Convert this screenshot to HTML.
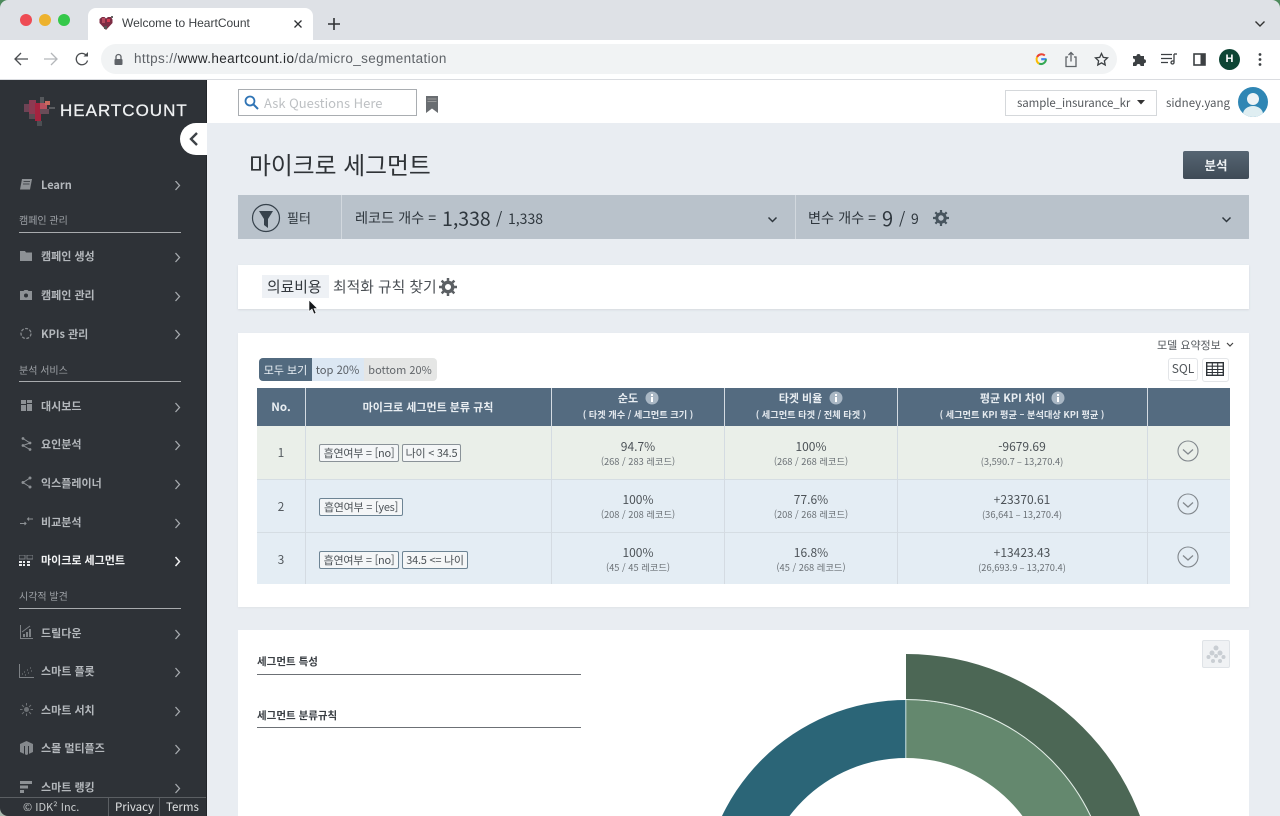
<!DOCTYPE html>
<html lang="ko"><head><meta charset="utf-8"><title>Welcome to HeartCount</title>
<style>
html,body{margin:0;padding:0;width:1280px;height:816px;overflow:hidden;background:#e9edf2}
body{position:relative;font-family:"Noto Sans CJK KR","Liberation Sans",sans-serif;color:#3a4046}
.a,.t,svg.a{position:absolute}
.t{white-space:nowrap;line-height:20px;height:20px}
.c{transform:translateX(-50%);text-align:center}
.ui{font-family:"Liberation Sans","Noto Sans CJK KR",sans-serif}
.m{font-size:11px;font-weight:700;color:#b4b8bc;left:41px}
.s{font-size:10px;color:#9da1a6;left:19px}
.l{position:absolute;left:19px;width:162px;height:1px;background:#a8abae}
.hd{font-size:11px;font-weight:700;color:#e9eef2}
.sb{font-size:9.2px;font-weight:700;color:#e4e9ee}
.v{font-size:12px;color:#4c5257}
.d{font-size:9.3px;color:#6b7176}
.tag{position:absolute;height:18px;line-height:16px;box-sizing:border-box;border:1px solid #8a9298;border-radius:2px;background:#f4f6f7;font-size:11px;letter-spacing:-.25px;color:#4c5257;padding:0;white-space:nowrap;text-align:center}
.vl{position:absolute;width:1px;background:#d4dbe2}
.n{font-size:12px;color:#555b60}
.f{line-height:18px;height:18px}
</style></head><body>

<!-- browser chrome -->
<div class="a" style="left:0;top:0;width:1280px;height:40px;background:#dee1e6"></div>
<svg class="a" style="left:0;top:0" width="8" height="8"><path d="M0 0h8A8 8 0 0 0 0 8z" fill="#4d8a5c"/></svg>
<svg class="a" style="left:1272px;top:0" width="8" height="8"><path d="M8 0H0A8 8 0 0 1 8 8z" fill="#4d8a5c"/></svg>
<div class="a" style="left:0;top:40px;width:1280px;height:39px;background:#fff"></div>
<div class="a" style="left:0;top:79px;width:1280px;height:1px;background:#dadce0"></div>
<div class="a" style="left:88px;top:8px;width:225px;height:34px;background:#fff;border-radius:8px 8px 0 0"></div>
<div class="a" style="left:20px;top:14px;width:12px;height:12px;border-radius:50%;background:#ee4b54"></div>
<div class="a" style="left:39px;top:14px;width:12px;height:12px;border-radius:50%;background:#edb22e"></div>
<div class="a" style="left:58px;top:14px;width:12px;height:12px;border-radius:50%;background:#35c84a"></div>
<svg class="a" style="left:98px;top:15px" width="17" height="17" viewBox="0 0 17 17"><path d="M8 15L1.500 8V4L4 2h2.500L8 3.500 10 2h3l1.500 2.500V8Z" fill="#7c2c44"/><path d="M4 3h3v5H4z" fill="#b54a5e"/><path d="M9 4h3v3H9z" fill="#d43a50"/><path d="M6 11h3v3H6z" fill="#555"/><path d="M13 1h2v2h-2z" fill="#666"/></svg>
<div class="t ui" style="left:122px;top:13px;font-size:12px;color:#3c4043">Welcome to HeartCount</div>
<svg class="a" style="left:293px;top:19px" width="10" height="10" viewBox="0 0 10 10"><path d="M1.500 1.500l7 7M8.500 1.500l-7 7" stroke="#2f3134" stroke-width="1.300" fill="none"/></svg>
<svg class="a" style="left:327px;top:17px" width="14" height="14" viewBox="0 0 14 14"><path d="M7 1v12M1 7h12" stroke="#2f3134" stroke-width="1.600"/></svg>
<svg class="a" style="left:1254px;top:20px" width="12" height="8" viewBox="0 0 12 8"><path d="M1.500 1.500L6 6l4.500-4.500" stroke="#333" stroke-width="1.400" fill="none"/></svg>

<svg class="a" style="left:13px;top:51px" width="16" height="16" viewBox="0 0 16 16"><path d="M15 8H2M8 2L2 8l6 6" stroke="#4a4d50" stroke-width="1.300" fill="none"/></svg>
<svg class="a" style="left:43px;top:51px" width="16" height="16" viewBox="0 0 16 16"><path d="M1 8h13M8 2l6 6-6 6" stroke="#b4b7ba" stroke-width="1.300" fill="none"/></svg>
<svg class="a" style="left:74px;top:51px" width="16" height="16" viewBox="0 0 16 16"><path d="M13.500 9.500A5.700 5.700 0 1 1 12 4" stroke="#4a4d50" stroke-width="1.300" fill="none"/><path d="M9.500 5.500H14V1z" fill="#4a4d50"/></svg>
<div class="a" style="left:101px;top:44px;width:1016px;height:30px;border-radius:15px;background:#f1f3f4"></div>
<svg class="a" style="left:113px;top:53px" width="11" height="13" viewBox="0 0 11 13"><path d="M3 6V4a2.500 2.500 0 0 1 5 0v2" stroke="#5f6368" stroke-width="1.300" fill="none"/><rect x="1.500" y="6" width="8" height="6" rx="1" fill="#5f6368"/></svg>
<div class="t ui" style="left:134px;top:49px;font-size:13.5px;color:#5f6368;letter-spacing:.38px">https://<span style="color:#26282b">www.heartcount.io</span>/da/micro_segmentation</div>
<!-- google G -->
<svg class="a" style="left:1034px;top:52px" width="14" height="14" viewBox="0 0 14 14"><path d="M12.500 7.200H7.200" stroke="#4285f4" stroke-width="2.200"/><path d="M12 7.200A5 5 0 0 1 5 11.600" stroke="#34a853" stroke-width="2" fill="none"/><path d="M5 11.600A5 5 0 0 1 3.100 5" stroke="#fbbc05" stroke-width="2" fill="none"/><path d="M3.100 5A5 5 0 0 1 10.800 3.500" stroke="#ea4335" stroke-width="2" fill="none"/></svg>
<svg class="a" style="left:1064px;top:51px" width="14" height="17" viewBox="0 0 14 17"><path d="M4 6H2v9.500h10V6h-2" stroke="#5f6368" stroke-width="1.300" fill="none"/><path d="M7 10.500V1.500M4.500 4L7 1.500 9.500 4" stroke="#5f6368" stroke-width="1.300" fill="none"/></svg>
<svg class="a" style="left:1094px;top:52px" width="15" height="15" viewBox="0 0 15 15"><path d="M7.500 1.500l1.800 3.900 4.200.5-3.100 2.900.8 4.200-3.700-2.100-3.700 2.100.8-4.200L1.500 5.900l4.200-.5z" stroke="#3c4043" stroke-width="1.300" fill="none"/></svg>
<svg class="a" style="left:1132px;top:52px" width="15" height="15" viewBox="0 0 15 15"><path d="M1 4h3.500a2 2 0 1 1 4 0H12v3.200a2 2 0 1 1 0 4V14H8.500a2 2 0 1 0-4 0H1v-3.500a2 2 0 1 0 0-4z" fill="#3c4043"/></svg>
<svg class="a" style="left:1161px;top:53px" width="16" height="13" viewBox="0 0 16 13"><path d="M0 1.500h11M0 5.500h11M0 9.500h7" stroke="#3c4043" stroke-width="1.200"/><path d="M13 1v8.500a1.500 1.500 0 1 1-1.500-1.500H13" stroke="#3c4043" stroke-width="1.300" fill="none"/><path d="M13 1h3" stroke="#3c4043" stroke-width="1.300"/></svg>
<svg class="a" style="left:1193px;top:53px" width="13" height="13" viewBox="0 0 13 13"><rect x="1" y="1" width="11" height="11" stroke="#3c4043" stroke-width="1.600" fill="none"/><rect x="7.500" y="1" width="4.500" height="11" fill="#3c4043"/></svg>
<div class="a" style="left:1219px;top:49px;width:21px;height:21px;border-radius:50%;background:#0d4534"></div>
<div class="t ui c" style="left:1229.500px;top:49px;font-size:11px;font-weight:700;color:#fff;line-height:21px">H</div>
<svg class="a" style="left:1257px;top:52px" width="6" height="15" viewBox="0 0 6 15"><circle cx="3" cy="2.500" r="1.400" fill="#3c4043"/><circle cx="3" cy="7.500" r="1.400" fill="#3c4043"/><circle cx="3" cy="12.500" r="1.400" fill="#3c4043"/></svg>

<!-- top bar -->
<div class="a" style="left:207px;top:80px;width:1073px;height:43px;background:#fff"></div>
<div class="a" style="left:238px;top:89px;width:179px;height:27px;box-sizing:border-box;border:1px solid #a9adb1;background:#fff"></div>
<svg class="a" style="left:244px;top:95px" width="15" height="15" viewBox="0 0 15 15"><circle cx="6" cy="6" r="4.500" stroke="#2f74b5" stroke-width="1.800" fill="none"/><path d="M9.500 9.500L14 14" stroke="#2f74b5" stroke-width="2"/></svg>
<div class="t" style="left:264px;top:93px;font-size:13px;color:#bdc0c3">Ask Questions Here</div>
<svg class="a" style="left:426px;top:96px" width="12" height="17" viewBox="0 0 12 17"><path d="M0 0h12v17L6 12.500 0 17z" fill="#696d71"/><path d="M1.500 3h9M1.500 5.500h9" stroke="#aaa" stroke-width=".7"/></svg>
<div class="a" style="left:1005px;top:90px;width:152px;height:26px;box-sizing:border-box;border:1px solid #d5d8db;background:#fff"></div>
<div class="t" style="left:1017px;top:93px;font-size:11.500px;color:#54585c;letter-spacing:-.1px">sample_insurance_kr</div>
<svg class="a" style="left:1137px;top:100px" width="8" height="5"><path d="M0 0h8L4 4.500z" fill="#333"/></svg>
<div class="t" style="left:1166px;top:93px;font-size:11.500px;color:#54585c">sidney.yang</div>
<svg class="a" style="left:1238px;top:87px" width="30" height="30" viewBox="0 0 30 30"><defs><clipPath id="cp"><circle cx="15" cy="15" r="15"/></clipPath></defs><circle cx="15" cy="15" r="15" fill="#2f86b4"/><g clip-path="url(#cp)"><circle cx="15" cy="12" r="6" fill="#eef3f5"/><ellipse cx="15" cy="27" rx="10" ry="8" fill="#dfeef2"/></g></svg>

<!-- sidebar -->
<div class="a" style="left:0;top:80px;width:207px;height:736px;background:#2e3237;border-right:1px solid #23262a;box-sizing:border-box"></div>
<svg class="a" style="left:23px;top:95px" width="34" height="32" viewBox="0 0 34 32"><rect x="1" y="9" width="6" height="8" fill="#6e4355"/><rect x="6" y="5" width="7" height="14" fill="#8c3a52"/><rect x="12" y="8" width="6" height="18" fill="#a5233f"/><rect x="17" y="2" width="4" height="6" fill="#55585c"/><rect x="17" y="8" width="7" height="6" fill="#b8505e"/><rect x="22" y="6" width="5" height="4" fill="#c86a5e"/><rect x="17" y="14" width="9" height="5" fill="#6a4c58"/><rect x="6" y="19" width="6" height="5" fill="#5a4a52"/><rect x="14" y="26" width="5" height="5" fill="#4c4f53"/><rect x="26" y="12" width="6" height="2" fill="#5a5d61"/></svg>
<div class="t ui" style="left:60px;top:101px;font-size:17px;color:#eef0f1;letter-spacing:1px;-webkit-text-stroke:.3px #eef0f1">HEARTCOUNT</div>
<div class="a" style="left:180px;top:123px;width:40px;height:32px;background:#fff;border-radius:16px 0 0 16px"></div>
<div class="a" style="left:207px;top:123px;width:13px;height:32px;background:#e9edf2"></div>
<svg class="a" style="left:188px;top:131px" width="11" height="16" viewBox="0 0 11 16"><path d="M9 2L3 8l6 6" stroke="#3d4247" stroke-width="2.400" fill="none"/></svg>

<svg class="a" style="left:19px;top:178px" width="14" height="13" viewBox="0 0 14 13"><path d="M3 1h10l-2 10.500H1z" fill="#8d9195"/><path d="M4.500 3.500h6.500M4 6h6.500" stroke="#2e3237" stroke-width=".8"/></svg>
<div class="t m" style="top:174.500px">Learn</div>
<div class="t s" style="top:210px">캠페인 관리</div><div class="l" style="top:232px"></div>
<svg class="a" style="left:20px;top:251px" width="12" height="10"><path d="M0 0h5l1 1.500h6V10H0z" fill="#8d9195"/></svg>
<div class="t m" style="top:246px">캠페인 생성</div>
<svg class="a" style="left:20px;top:290px" width="12" height="10"><path d="M0 1h3.500l1-1h3l1 1H12v9H0z" fill="#8d9195"/><circle cx="6" cy="5.500" r="2" fill="#2e3237"/></svg>
<div class="t m" style="top:285px">캠페인 관리</div>
<svg class="a" style="left:20px;top:327px" width="12" height="13"><circle cx="6" cy="6.500" r="5" stroke="#85898d" stroke-width="1.300" stroke-dasharray="3 1.500" fill="none"/></svg>
<div class="t m" style="top:324px">KPIs 관리</div>
<div class="t s" style="top:359.500px">분석 서비스</div><div class="l" style="top:381px"></div>
<svg class="a" style="left:21px;top:400px" width="11" height="11"><path d="M0 0h5v4H0zM6 0h5v3H6zM0 5h5v6H0zM6 4h5v7H6z" fill="#8d9195"/></svg>
<div class="t m" style="top:396px">대시보드</div>
<svg class="a" style="left:21px;top:437px" width="11" height="14" viewBox="0 0 11 14"><path d="M2 1.500L9 6 2 8.500 9 12.500" stroke="#8d9195" stroke-width="1" fill="none"/><circle cx="2" cy="1.500" r="1.400" fill="#8d9195"/><circle cx="9" cy="6" r="1.400" fill="#8d9195"/><circle cx="2" cy="8.500" r="1.400" fill="#8d9195"/><circle cx="9" cy="12.500" r="1.400" fill="#8d9195"/></svg>
<div class="t m" style="top:434px">요인분석</div>
<svg class="a" style="left:21px;top:476px" width="11" height="13" viewBox="0 0 11 13"><path d="M9 2L2 6.500 9 11" stroke="#8d9195" stroke-width="1" fill="none"/><circle cx="9" cy="2" r="1.500" fill="#8d9195"/><circle cx="2" cy="6.500" r="1.500" fill="#8d9195"/><circle cx="9" cy="11" r="1.500" fill="#8d9195"/></svg>
<div class="t m" style="top:473px">익스플레이너</div>
<svg class="a" style="left:20px;top:517px" width="13" height="9" viewBox="0 0 13 9"><path d="M0 6.500h6M4.500 5l1.500 1.500L4.500 8M13 2H7.500M9 .5L7.500 2 9 3.500" stroke="#8d9195" stroke-width="1" fill="none"/></svg>
<div class="t m" style="top:512px">비교분석</div>
<svg class="a" style="left:19px;top:555px" width="14" height="11"><path d="M0 6h3v2H0zM4 6h2v2H4zM8 6h3v2H8zM0 9h3v2H0zM4 9h2v2H4zM8 9h3v2H8z" fill="#e8eaec"/><path d="M0 0h6v4H0zM8 0h6v4H8z" fill="none" stroke="#7b7f83"/></svg>
<div class="t m" style="top:550px;color:#f3f4f5">마이크로 세그먼트</div>
<div class="t s" style="top:586px">시각적 발견</div><div class="l" style="top:608px"></div>
<svg class="a" style="left:20px;top:625px" width="13" height="14" viewBox="0 0 13 14"><path d="M.5 0v13.500H13" stroke="#7d8185" fill="none"/><path d="M3 12V9h2v3zM6 12V7h2v5zM9 12V4h2v8z" fill="#7d8185"/><path d="M2 7l4-3 4-3" stroke="#7d8185" fill="none"/></svg>
<div class="t m" style="top:622.500px">드릴다운</div>
<svg class="a" style="left:19px;top:664px" width="15" height="14" viewBox="0 0 15 14"><path d="M.5 0v13.500H15" stroke="#7d8185" fill="none"/><path d="M3 10h1M5 8h1M6 11h1M8 6h1M9 9h1M11 4h1M12 7h1" stroke="#7d8185"/></svg>
<div class="t m" style="top:661px">스마트 플롯</div>
<svg class="a" style="left:20px;top:703px" width="13" height="13" viewBox="0 0 13 13"><circle cx="6.500" cy="6.500" r="2.500" fill="#6d7175"/><path d="M6.500 0v2.500M6.500 10.500V13M0 6.500h2.500M10.500 6.500H13M2 2l2 2M9 9l2 2M11 2L9 4M4 9l-2 2" stroke="#6d7175"/></svg>
<div class="t m" style="top:700px">스마트 서치</div>
<svg class="a" style="left:20px;top:741px" width="13" height="14" viewBox="0 0 13 14"><path d="M6.500 0L13 3v8l-6.500 3L0 11V3z" fill="#85898d"/><path d="M4.500 5v9M8.500 5v9" stroke="#2e3237"/></svg>
<div class="t m" style="top:738px">스몰 멀티플즈</div>
<svg class="a" style="left:20px;top:781px" width="12" height="12"><path d="M0 0h12v3H0zM0 4.500h8v3H0zM0 9h4v3H0z" fill="#8d9195"/></svg>
<div class="t m" style="top:777px">스마트 랭킹</div>
<!-- chevrons -->
<svg class="a" style="left:174px;top:181px" width="7" height="620" viewBox="0 0 7 620" fill="none" stroke="#a6aaae" stroke-width="1.300"><path d="M1.500 0l4 4.500-4 4.500M1.500 72l4 4.500-4 4.500M1.500 111l4 4.500-4 4.500M1.500 149l4 4.500-4 4.500M1.500 222l4 4.500-4 4.500M1.500 260l4 4.500-4 4.500M1.500 299l4 4.500-4 4.500M1.500 338l4 4.500-4 4.500M1.500 449l4 4.500-4 4.500M1.500 487l4 4.500-4 4.500M1.500 526l4 4.500-4 4.500M1.500 564l4 4.500-4 4.500M1.500 603l4 4.500-4 4.500"/><path d="M1.500 376l4 4.500-4 4.500" stroke="#f0f1f2" stroke-width="1.500"/></svg>
<div class="a" style="left:0;top:797px;width:206px;height:19px;background:#2e3237;border-top:1px solid #5b5f63;box-sizing:border-box"></div>
<div class="a" style="left:108px;top:797px;width:1px;height:19px;background:#5b5f63"></div>
<div class="a" style="left:159px;top:797px;width:1px;height:19px;background:#5b5f63"></div>
<div class="t f" style="left:23px;top:798px;font-size:11px;color:#c6c9cb">© IDK² Inc.</div>
<div class="t f" style="left:115px;top:798px;font-size:11.500px;color:#e2e4e5">Privacy</div>
<div class="t f" style="left:166px;top:798px;font-size:11.500px;color:#e2e4e5">Terms</div>
<svg class="a" style="left:0;top:808px" width="8" height="8"><path d="M0 8h8A8 8 0 0 1 0 0z" fill="#a9b8ad"/></svg>

<!-- heading -->
<div class="t" style="left:249px;top:149px;font-size:23.800px;line-height:30px;height:30px;color:#2f3337">마이크로 세그먼트</div>
<div class="a" style="left:1183px;top:151px;width:66px;height:28px;border-radius:2px;background:linear-gradient(#566573,#3f4b57)"></div>
<div class="t c" style="left:1216px;top:155px;font-size:12.500px;font-weight:700;color:#eef1f3">분석</div>

<!-- filter bar -->
<div class="a" style="left:238px;top:195px;width:1011px;height:44px;background:#b9c2cb"></div>
<div class="a" style="left:341px;top:195px;width:1px;height:44px;background:#d2d8de"></div>
<div class="a" style="left:795px;top:195px;width:1px;height:44px;background:#d2d8de"></div>
<svg class="a" style="left:251px;top:203px" width="30" height="30" viewBox="0 0 30 30"><circle cx="15" cy="15" r="13.500" stroke="#37424c" stroke-width="1.200" fill="none"/><path d="M8 8h14l-5 8v9l-4-3v-6z" fill="#37424c"/></svg>
<div class="t" style="left:287px;top:207.500px;font-size:13px;color:#2f373e">필터</div>
<div class="t" style="left:355px;top:208px;font-size:14.200px;color:#2f373e">레코드 개수 =</div>
<div class="t" style="left:442px;top:208px;font-size:19.500px;color:#2f373e">1,338</div>
<div class="t" style="left:496px;top:208px;font-size:16px;color:#2f373e">/</div>
<div class="t" style="left:508px;top:209px;font-size:14px;color:#2f373e">1,338</div>
<svg class="a" style="left:767px;top:216px" width="11" height="8"><path d="M1.500 1.500L5.500 5.500l4-4" stroke="#2f373e" stroke-width="1.500" fill="none"/></svg>
<div class="t" style="left:808px;top:208px;font-size:14.200px;color:#2f373e">변수 개수 =</div>
<div class="t" style="left:882px;top:208px;font-size:20px;color:#2f373e">9</div>
<div class="t" style="left:899px;top:208px;font-size:16px;color:#2f373e">/</div>
<div class="t" style="left:911px;top:209px;font-size:14px;color:#2f373e">9</div>
<svg class="a" style="left:933px;top:210px" width="16" height="16" viewBox="0 0 16 16"><circle cx="8" cy="8" r="4.200" stroke="#47545e" stroke-width="3" fill="none"/><path d="M8 0v16M0 8h16M2.300 2.300l11.400 11.400M13.700 2.300L2.300 13.700" stroke="#47545e" stroke-width="2.200" stroke-dasharray="2.600 10.800 2.600"/></svg>
<svg class="a" style="left:1221px;top:216px" width="11" height="8"><path d="M1.500 1.500L5.500 5.500l4-4" stroke="#2f373e" stroke-width="1.500" fill="none"/></svg>

<!-- title card -->
<div class="a" style="left:238px;top:265px;width:1011px;height:44px;background:#fff;box-shadow:0 1px 2px #d5d9de"></div>
<div class="a" style="left:262px;top:275px;width:67px;height:23px;background:#eef1f5"></div>
<div class="t" style="left:267px;top:277px;font-size:14.800px;color:#34393e">의료비용</div>
<div class="t" style="left:333px;top:277px;font-size:14.800px;color:#4a4f54">최적화 규칙 찾기</div>
<svg class="a" style="left:439px;top:278px" width="18" height="18" viewBox="0 0 16 16"><circle cx="8" cy="8" r="4.200" stroke="#5b5f63" stroke-width="3" fill="none"/><path d="M8 0v16M0 8h16M2.300 2.300l11.400 11.400M13.700 2.300L2.300 13.700" stroke="#5b5f63" stroke-width="2.200" stroke-dasharray="2.600 10.800 2.600"/></svg>
<svg class="a" style="left:308px;top:299px;z-index:5" width="11" height="17" viewBox="0 0 11 17"><path d="M1 1v11.500l3-2.500 2 5 2-1-2-4.500h3.500z" fill="#15171a" stroke="#fff" stroke-width=".6"/></svg>

<!-- table card -->
<div class="a" style="left:238px;top:333px;width:1011px;height:274px;background:#fff;box-shadow:0 1px 2px #dfe3e7"></div>
<div class="t" style="left:1157px;top:335px;font-size:11px;color:#54595e">모델 요약정보</div>
<svg class="a" style="left:1226px;top:342px" width="8" height="6"><path d="M1 1l3 3 3-3" stroke="#444" stroke-width="1.200" fill="none"/></svg>
<div class="a" style="left:1168px;top:358px;width:30px;height:23px;box-sizing:border-box;border:1px solid #e3e5e8;border-radius:3px"></div>
<div class="t c" style="left:1183px;top:359px;font-size:12px;color:#52575b">SQL</div>
<div class="a" style="left:1202px;top:358px;width:27px;height:24px;box-sizing:border-box;border:1px solid #e3e5e8;border-radius:3px"></div>
<svg class="a" style="left:1206px;top:362px" width="18" height="14" viewBox="0 0 18 14"><rect x=".7" y=".7" width="16.600" height="12.600" fill="none" stroke="#2e3338" stroke-width="1.400"/><path d="M.5 4.200h17M.5 7.500h17M.5 10.500h17M6.300 1v12M11.700 1v12" stroke="#2e3338" stroke-width="1.100"/></svg>
<div class="a" style="left:259px;top:358px;width:178px;height:23px;border-radius:4px;background:#e5e6e5"></div>
<div class="a" style="left:259px;top:358px;width:53px;height:23px;border-radius:4px 0 0 4px;background:#526a7f"></div>
<div class="a" style="left:312px;top:358px;width:52px;height:23px;background:#dbe7f3"></div>
<div class="t c" style="left:285.500px;top:360px;font-size:11px;color:#eaf0f5">모두 보기</div>
<div class="t c" style="left:337.500px;top:360px;font-size:11.200px;color:#5b6168">top 20%</div>
<div class="t c" style="left:400px;top:360px;font-size:11px;color:#63676b">bottom 20%</div>

<div class="a" style="left:257px;top:388px;width:973px;height:38px;background:#546b80"></div>
<div class="a" style="left:257px;top:426px;width:973px;height:53px;background:#eaefe9"></div>
<div class="a" style="left:257px;top:479px;width:973px;height:53px;background:#e4edf4;border-top:1px solid #d5dde3;box-sizing:border-box"></div>
<div class="a" style="left:257px;top:532px;width:973px;height:52px;background:#e4edf4;border-top:1px solid #d5dde3;box-sizing:border-box"></div>
<div class="vl" style="left:305px;top:388px;height:196px"></div>
<div class="vl" style="left:551px;top:388px;height:196px"></div>
<div class="vl" style="left:724px;top:388px;height:196px"></div>
<div class="vl" style="left:897px;top:388px;height:196px"></div>
<div class="vl" style="left:1147px;top:388px;height:196px"></div>

<div class="t hd c" style="left:281px;top:397px;font-size:11.500px">No.</div>
<div class="t hd c" style="left:428px;top:397px">마이크로 세그먼트 분류 규칙</div>
<div class="t hd c" style="left:628px;top:388px">순도</div>
<div class="t sb c" style="left:638px;top:404px">( 타겟 개수 / 세그먼트 크기 )</div>
<div class="t hd c" style="left:800.500px;top:388px">타겟 비율</div>
<div class="t sb c" style="left:811px;top:404px">( 세그먼트 타겟 / 전체 타겟 )</div>
<div class="t hd c" style="left:1012.500px;top:388px">평균 KPI 차이</div>
<div class="t sb c" style="left:1022px;top:404px">( 세그먼트 KPI 평균 – 분석대상 KPI 평균 )</div>
<svg class="a" style="left:645px;top:391px" width="14" height="14"><circle cx="7" cy="7" r="6.500" fill="#a9b7c4"/><rect x="6" y="6" width="2" height="5" fill="#fff"/><rect x="6" y="3" width="2" height="2" fill="#fff"/></svg>
<svg class="a" style="left:829px;top:391px" width="14" height="14"><circle cx="7" cy="7" r="6.500" fill="#a9b7c4"/><rect x="6" y="6" width="2" height="5" fill="#fff"/><rect x="6" y="3" width="2" height="2" fill="#fff"/></svg>
<svg class="a" style="left:1051px;top:391px" width="14" height="14"><circle cx="7" cy="7" r="6.500" fill="#a9b7c4"/><rect x="6" y="6" width="2" height="5" fill="#fff"/><rect x="6" y="3" width="2" height="2" fill="#fff"/></svg>

<!-- row 1 -->
<div class="t n c" style="left:281px;top:443px">1</div>
<div class="tag" style="left:319px;top:444px;width:80px">흡연여부 = [no]</div>
<div class="tag" style="left:402px;top:444px;width:59px">나이 &lt; 34.5</div>
<div class="t v c" style="left:638px;top:437px">94.7%</div><div class="t d c" style="left:638px;top:451px">(268 / 283 레코드)</div>
<div class="t v c" style="left:811px;top:437px">100%</div><div class="t d c" style="left:811px;top:451px">(268 / 268 레코드)</div>
<div class="t v c" style="left:1022px;top:437px">-9679.69</div><div class="t d c" style="left:1022px;top:451px">(3,590.7 – 13,270.4)</div>
<!-- row 2 -->
<div class="t n c" style="left:281px;top:497px">2</div>
<div class="tag" style="left:319px;top:498px;width:84px;border-color:#6d8494">흡연여부 = [yes]</div>
<div class="t v c" style="left:638px;top:490px">100%</div><div class="t d c" style="left:638px;top:504px">(208 / 208 레코드)</div>
<div class="t v c" style="left:811px;top:490px">77.6%</div><div class="t d c" style="left:811px;top:504px">(208 / 268 레코드)</div>
<div class="t v c" style="left:1022px;top:490px">+23370.61</div><div class="t d c" style="left:1022px;top:504px">(36,641 – 13,270.4)</div>
<!-- row 3 -->
<div class="t n c" style="left:281px;top:550px">3</div>
<div class="tag" style="left:319px;top:551px;width:80px;border-color:#6d8494">흡연여부 = [no]</div>
<div class="tag" style="left:402px;top:551px;width:66px;border-color:#6d8494">34.5 &lt;= 나이</div>
<div class="t v c" style="left:638px;top:543px">100%</div><div class="t d c" style="left:638px;top:557px">(45 / 45 레코드)</div>
<div class="t v c" style="left:811px;top:543px">16.8%</div><div class="t d c" style="left:811px;top:557px">(45 / 268 레코드)</div>
<div class="t v c" style="left:1022px;top:543px">+13423.43</div><div class="t d c" style="left:1022px;top:557px">(26,693.9 – 13,270.4)</div>
<!-- row buttons -->
<svg class="a" style="left:1177px;top:440px" width="22" height="128" viewBox="0 0 22 128" fill="none" stroke="#82888d" stroke-width="1.100"><circle cx="11" cy="11" r="10"/><path d="M6 9.500l5 4.500 5-4.500" stroke-width="1.300"/><circle cx="11" cy="64" r="10"/><path d="M6 62.500l5 4.500 5-4.500" stroke-width="1.300"/><circle cx="11" cy="117" r="10"/><path d="M6 115.500l5 4.500 5-4.500" stroke-width="1.300"/></svg>

<!-- bottom card -->
<div class="a" style="left:238px;top:630px;width:1011px;height:186px;background:#fff"></div>
<div class="t" style="left:257px;top:652px;font-size:10.500px;font-weight:700;color:#3a3f44">세그먼트 특성</div>
<div class="a" style="left:257px;top:674px;width:324px;height:1px;background:#6c7075"></div>
<div class="t" style="left:257px;top:706px;font-size:10.500px;font-weight:700;color:#3a3f44">세그먼트 분류규칙</div>
<div class="a" style="left:257px;top:727px;width:324px;height:1px;background:#6c7075"></div>
<div class="a" style="left:1202px;top:640px;width:28px;height:28px;box-sizing:border-box;border:1px solid #dfe3e7;border-radius:2px;background:#f0f2f4"></div>
<svg class="a" style="left:1204px;top:642px" width="24" height="24" viewBox="0 0 24 24" fill="#c9ced3"><circle cx="12" cy="6" r="2.500"/><circle cx="8" cy="11" r="2.500"/><circle cx="16" cy="11" r="2.500"/><circle cx="4.500" cy="15" r="2"/><circle cx="12" cy="14" r="2"/><circle cx="19.500" cy="15" r="2"/><circle cx="9" cy="19" r="2"/><circle cx="16" cy="19" r="2"/></svg>
<!-- donut: centre 906,904 -->
<svg class="a" style="left:700px;top:640px" width="460" height="176" viewBox="700 640 460 176">
<path d="M906 654A250 250 0 0 1 1156 904H1110A204 204 0 0 0 906 700Z" fill="#4c6755"/>
<path d="M906 700A204 204 0 0 1 1110 904H1052A146 146 0 0 0 906 758Z" fill="#64886e"/>
<path d="M906 700A204 204 0 0 0 702 904H760A146 146 0 0 1 906 758Z" fill="#2b6577"/>
<path d="M906 699.500A204.500 204.500 0 0 1 1110.500 904" fill="none" stroke="#e6f1ea" stroke-width="1"/>
<path d="M905.800 700V758" stroke="#cfe6e6" stroke-width="1"/>
</svg>
</body></html>
